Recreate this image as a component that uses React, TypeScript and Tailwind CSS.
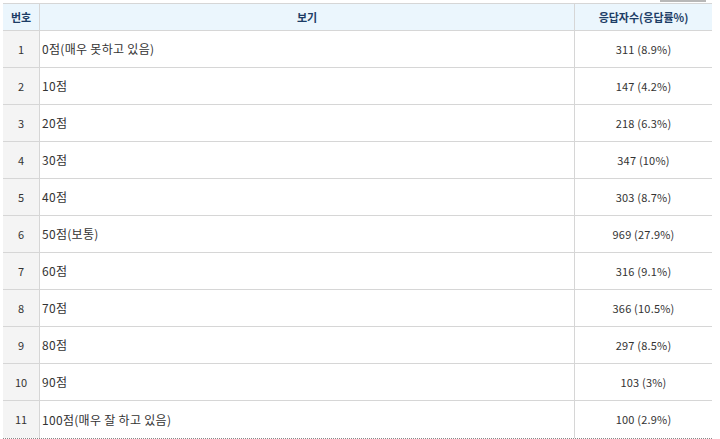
const rows = [
  ["1", "0점(매우 못하고 있음)", "311 (8.9%)"],
  ["2", "10점", "147 (4.2%)"],
  ["3", "20점", "218 (6.3%)"],
  ["4", "30점", "347 (10%)"],
  ["5", "40점", "303 (8.7%)"],
  ["6", "50점(보통)", "969 (27.9%)"],
  ["7", "60점", "316 (9.1%)"],
  ["8", "70점", "366 (10.5%)"],
  ["9", "80점", "297 (8.5%)"],
  ["10", "90점", "103 (3%)"],
  ["11", "100점(매우 잘 하고 있음)", "100 (2.9%)"],
];

export default function App() {
  return (
    <div
      className="h-[439px] w-[720px] overflow-hidden bg-white pl-[3px] text-[11px] text-[#333]"
      style={{ fontFamily: '"Noto Sans CJK KR", "Liberation Sans", sans-serif' }}
    >
      <div className="flex h-[3px] w-[709px] justify-end pr-[6px]">
        <div className="h-[2px] w-[46px] bg-[#b8b8b8]" />
      </div>
      <div className="w-[709px] border-b border-dotted border-[#888]">
        {/* header */}
        <div className="grid h-[28px] grid-cols-[37px_535px_1fr] border-y border-[#d6d6d6] bg-[#ebf6fd] font-bold text-[#1d3d66]">
          <div className="flex items-center justify-center border-r border-[#d6d6d6]">번호</div>
          <div className="flex items-center justify-center border-r border-[#d6d6d6]">보기</div>
          <div className="flex items-center justify-center">응답자수(응답률%)</div>
        </div>

        {rows.map(([no, label, value], i) => (
          <div
            key={no}
            className={
              "grid h-[37px] grid-cols-[37px_535px_1fr] " +
              (i < rows.length - 1 ? "border-b border-[#d6d6d6]" : "")
            }
          >
            <div className="flex items-center justify-center border-r border-[#d6d6d6] bg-[#f4f4f4]">{no}</div>
            <div className="flex items-center border-r border-[#d6d6d6] pl-[2px] text-[12px] tracking-[0.3px]">{label}</div>
            <div className="flex items-center justify-center tracking-[0.2px]">{value}</div>
          </div>
        ))}
      </div>
    </div>
  );
}
